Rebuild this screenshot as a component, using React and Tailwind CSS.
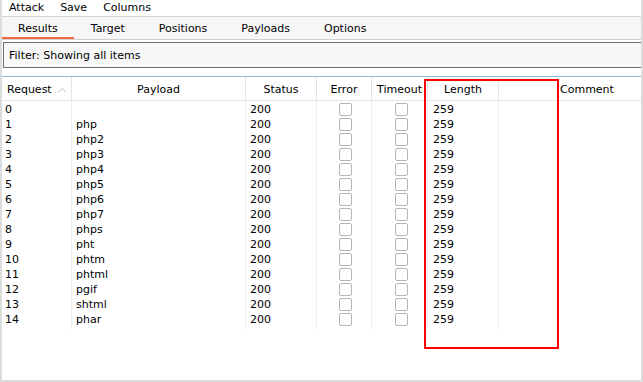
import React from 'react';

const rows = [
  ['0', ''],
  ['1', 'php'],
  ['2', 'php2'],
  ['3', 'php3'],
  ['4', 'php4'],
  ['5', 'php5'],
  ['6', 'php6'],
  ['7', 'php7'],
  ['8', 'phps'],
  ['9', 'pht'],
  ['10', 'phtm'],
  ['11', 'phtml'],
  ['12', 'pgif'],
  ['13', 'shtml'],
  ['14', 'phar'],
];

const cols = 'grid grid-cols-[70px_174px_71px_55px_56px_71px_59px_1fr]';

function Box() {
  return <span className="block w-[13px] h-[13px] rounded-[2px] border border-[#b4b4b4] bg-white" />;
}

export default function App() {
  return (
    <div
      className="relative w-[643px] h-[382px] overflow-hidden bg-white border-l-2 border-r-2 border-b-2 border-[#dcdcdc] text-[11px] text-black flex flex-col"
      style={{ fontFamily: '"DejaVu Sans", Verdana, sans-serif' }}
    >
      {/* menu */}
      <div className="h-[17px] flex items-center gap-4 pl-[7px] pt-px border-b border-[#d4d4d4] shrink-0">
        <span>Attack</span>
        <span>Save</span>
        <span>Columns</span>
      </div>

      {/* tabs */}
      <div className="h-[23px] flex bg-[#f7f7f7] border-b border-[#d0d0d0] shrink-0">
        <div className="relative flex items-center px-4 pt-[3px]">
          Results
          <span className="absolute left-0 right-0 bottom-0 h-[2px] bg-[#f26b3a]" />
        </div>
        <div className="flex items-center px-[17px] pt-[3px]">Target</div>
        <div className="flex items-center px-[17px] pt-[3px]">Positions</div>
        <div className="flex items-center px-[17px] pt-[3px]">Payloads</div>
        <div className="flex items-center px-[17px] pt-[3px]">Options</div>
      </div>

      {/* filter */}
      <div className="mt-[2px] ml-px h-[26px] flex items-center pl-[5px] pt-[3px] bg-[#f7f7f7] border-t border-b border-l border-[#6e6e6e] shrink-0">
        Filter: Showing all items
      </div>

      <div className="h-2 shrink-0" />
      <div className="h-px bg-[#8fb6e2] shrink-0" />

      {/* header */}
      <div className={`${cols} h-6 border-b border-[#e6e6e6] shrink-0`}>
        <div className="flex items-center pl-[5px] pt-[3px] border-r border-[#e4e4e4]">
          Request
          <svg width="10" height="6" viewBox="0 0 10 6" className="ml-[5px]">
            <path d="M1 5.5 L5 1.5 L9 5.5" fill="none" stroke="#bdbdbd" strokeWidth="1" />
          </svg>
        </div>
        <div className="flex items-center justify-center pt-[3px] border-r border-[#e4e4e4]">Payload</div>
        <div className="flex items-center justify-center pt-[3px] border-r border-[#e4e4e4]">Status</div>
        <div className="flex items-center justify-center pt-[3px] border-r border-[#e4e4e4]">Error</div>
        <div className="flex items-center justify-center pt-[3px] border-r border-[#e4e4e4] whitespace-nowrap overflow-hidden">Timeout</div>
        <div className="flex items-center justify-center pt-[3px] border-r border-[#e4e4e4]">Length</div>
        <div className="border-r border-[#e4e4e4]" />
        <div className="flex items-center pl-[2px] pt-[3px] whitespace-nowrap">Comment</div>
      </div>

      {/* rows */}
      <div>
        {rows.map(([n, p]) => (
          <div key={n} className={`${cols} h-[15px]`}>
            <div className="flex items-center pl-[3px] pt-px border-r border-[#f0f0f0]">{n}</div>
            <div className="flex items-center pl-1 pt-px border-r border-[#f0f0f0]">{p}</div>
            <div className="flex items-center pl-1 pt-px border-r border-[#f0f0f0]">200</div>
            <div className="flex items-center justify-center pl-[2px] border-r border-[#f0f0f0]"><Box /></div>
            <div className="flex items-center justify-center pl-[3px] border-r border-[#f0f0f0]"><Box /></div>
            <div className="flex items-center pl-[5px] pt-px border-r border-[#f0f0f0]">259</div>
            <div className="border-r border-[#f0f0f0]" />
            <div />
          </div>
        ))}
      </div>

      {/* highlight box */}
      <div className="absolute left-[422px] top-[79px] w-[135px] h-[270px] border-2 border-[#ff0000]" />
    </div>
  );
}
